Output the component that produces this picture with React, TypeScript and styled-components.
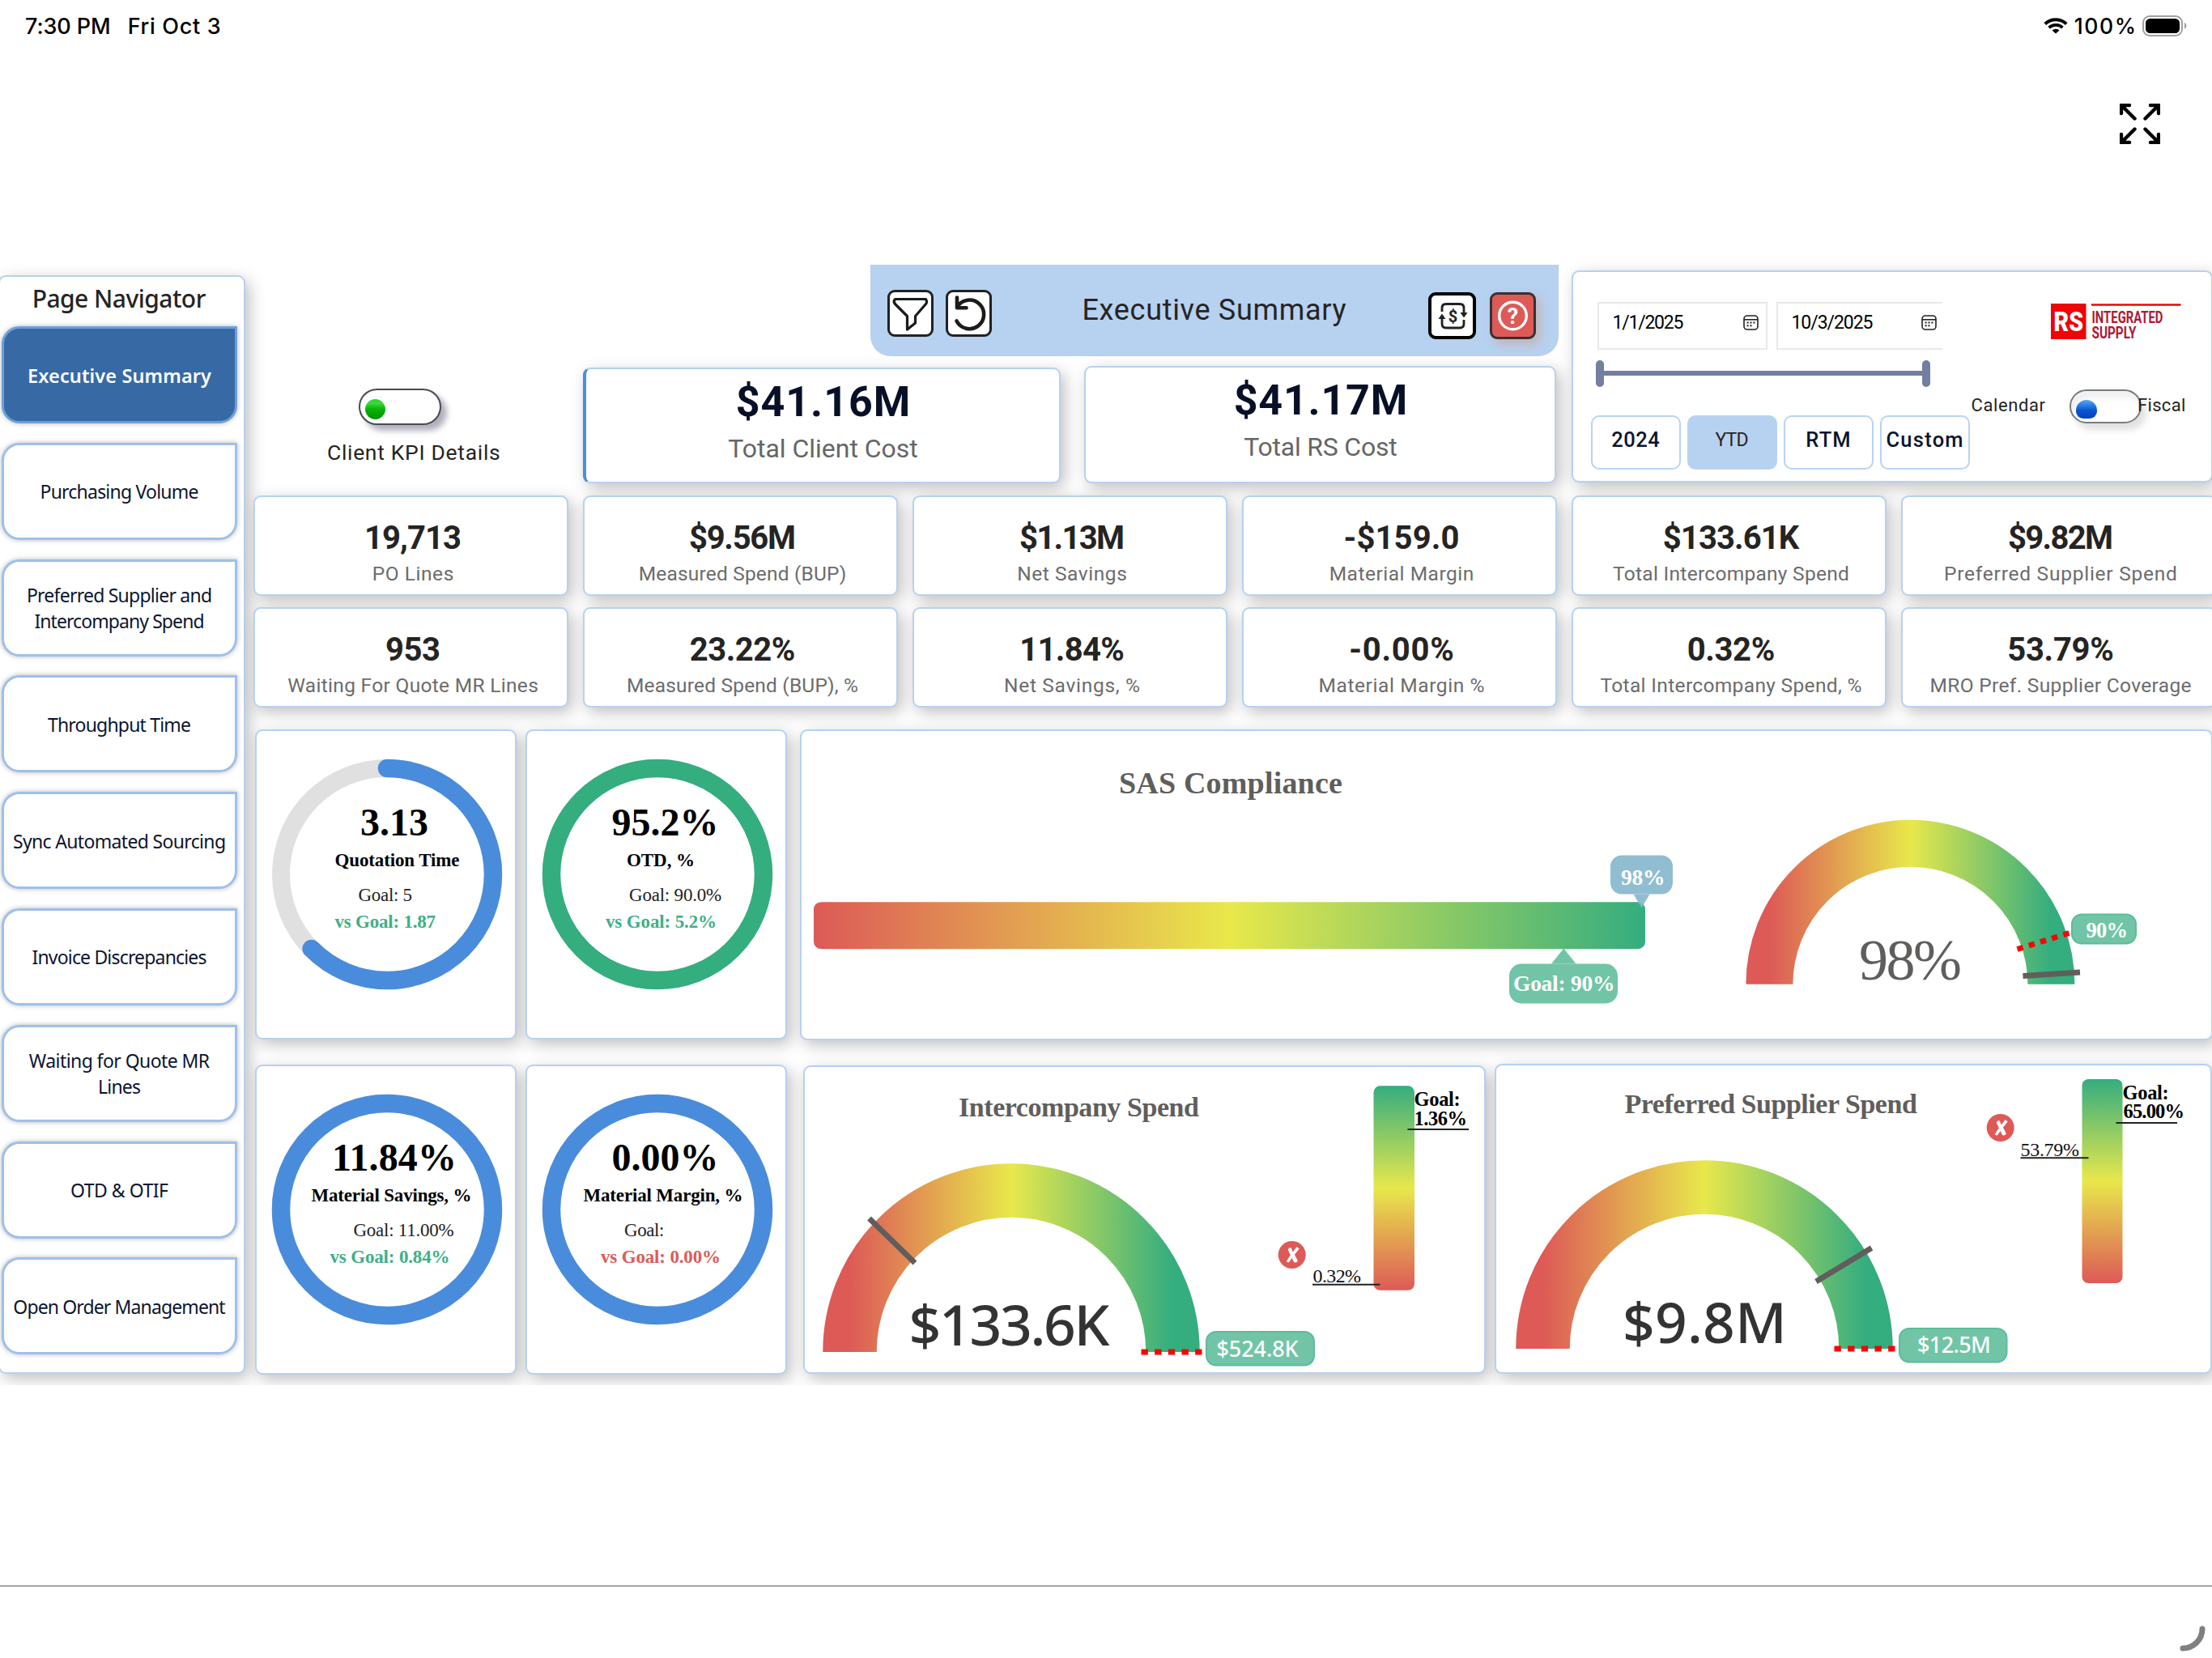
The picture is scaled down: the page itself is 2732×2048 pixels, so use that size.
import React from "react";
import styled, { createGlobalStyle, css } from "styled-components";

const GlobalStyle = createGlobalStyle`
  *, *::before, *::after { box-sizing: border-box; }
  body { margin: 0; background: #fff; overflow: hidden; }
  h1, h2, p { margin: 0; font-weight: inherit; }
`;

const fonts = {
  ui: 'Inter, "Liberation Sans", sans-serif',
  din: 'Roboto, "Liberation Sans", sans-serif',
  segoe: '"Noto Sans", "Open Sans", sans-serif',
  serif: '"Liberation Serif", "Times New Roman", serif',
};

const colors = {
  line: "#b7d1f0",
  blue: "#4a8cdc",
  green: "#34ad7f",
  red: "#dd5a57",
  mint: "#71c5a6",
  heading: "#605e5c",
  value: "#252423",
};

/* ---------- text that keeps a set width through its tracking ---------- */

const canvas = document.createElement("canvas").getContext("2d")!;

function tracking(text: string, font: string, width: number) {
  canvas.font = font;
  const m = canvas.measureText(text);
  const ink = m.actualBoundingBoxLeft + m.actualBoundingBoxRight;
  return (width - ink) / Math.max(1, text.length - 1);
}

type LabelProps = {
  children: string;
  size: number;
  weight?: number;
  family?: string;
  color?: string;
  line?: number;
  width?: number;
};

const LabelText = styled.span<{ $size: number; $weight: number; $family: string; $color: string; $line: number }>`
  display: block;
  flex: none;
  white-space: pre;
  font: ${(p) => `${p.$weight} ${p.$size}px/${p.$line}px ${p.$family}`};
  color: ${(p) => p.$color};
`;

function Label({ children, size, weight = 400, family = fonts.din, color = colors.value, line, width }: LabelProps) {
  const ls = width ? tracking(children, `${weight} ${size}px ${family}`, width) : 0;
  return (
    <LabelText
      $size={size}
      $weight={weight}
      $family={family}
      $color={color}
      $line={line ?? Math.round(size * 1.3)}
      style={{ letterSpacing: ls, marginRight: -ls }}
    >
      {children}
    </LabelText>
  );
}

/* ---------- page frame ---------- */

const Screen = styled.div`
  width: 2732px;
  height: 2048px;
  display: flex;
  flex-direction: column;
  background: #fff;
  overflow: hidden;
`;

const StatusBar = styled.header`
  height: 64px;
  flex: none;
  display: flex;
  align-items: center;
  justify-content: space-between;
  padding: 0 30px 0 31px;
`;

const StatusGroup = styled.div<{ $gap: number }>`
  display: flex;
  align-items: center;
  gap: ${(p) => p.$gap}px;
`;

const ActionRow = styled.div`
  height: 254px;
  flex: none;
  display: flex;
  justify-content: flex-end;
  padding: 64px 64px 0 0;
`;

const Report = styled.main`
  height: 1393px;
  flex: none;
  display: flex;
  align-items: flex-start;
  overflow: hidden;
`;

const Footer = styled.footer`
  margin-top: 247px;
  height: 90px;
  flex: none;
  border-top: 2px solid #a6a6a6;
  display: flex;
  justify-content: flex-end;
  align-items: flex-end;
  padding: 0 8px 8px 0;
`;

const cardFrame = css`
  background: #fff;
  border: 2px solid ${colors.line};
  border-radius: 9px;
  box-shadow: 5px 6px 19px rgba(0, 0, 0, 0.25);
`;

/* ---------- navigator ---------- */

const Navigator = styled.nav`
  ${cardFrame}
  width: 305px;
  height: 1357px;
  flex: none;
  margin: 22px 0 0 -2px;
  padding: 7px 8px 0 2px;
  display: flex;
  flex-direction: column;
  align-items: flex-start;
`;

const NavTitle = styled.h1`
  width: 290px;
  height: 54px;
  flex: none;
  display: flex;
  justify-content: center;
`;

const NavList = styled.div`
  display: flex;
  flex-direction: column;
  gap: 23.8px;
`;

const NavItem = styled.button<{ $active?: boolean }>`
  width: 291px;
  height: 120px;
  display: flex;
  flex-direction: column;
  align-items: center;
  justify-content: center;
  padding: 1px 0 0;
  border: 3px solid ${(p) => (p.$active ? "#6d9fd8" : "#9fc0ea")};
  border-radius: 22px 0 22px 22px;
  background: ${(p) => (p.$active ? "#376aa5" : "#fff")};
  box-shadow: 0 0 6px rgba(0, 0, 0, 0.28);
`;

const navItems: { lines: [string, number][]; active?: boolean }[] = [
  { lines: [["Executive Summary", 225]], active: true },
  { lines: [["Purchasing Volume", 193]] },
  { lines: [["Preferred Supplier and", 226], ["Intercompany Spend", 209]] },
  { lines: [["Throughput Time", 176]] },
  { lines: [["Sync Automated Sourcing", 261]] },
  { lines: [["Invoice Discrepancies", 215]] },
  { lines: [["Waiting for Quote MR", 223], ["Lines", 50]] },
  { lines: [["OTD & OTIF", 120]] },
  { lines: [["Open Order Management", 261]] },
];

/* ---------- top band ---------- */

const Body = styled.div`
  width: 2440px;
  flex: none;
  margin-left: -1px;
  display: flex;
  flex-direction: column;
`;

const TopBand = styled.div`
  height: 279px;
  display: flex;
  align-items: flex-start;
`;

const ToggleColumn = styled.div`
  width: 418px;
  flex: none;
  display: flex;
  flex-direction: column;
  padding: 162px 0 0 102px;
  gap: 17px;
`;

const KpiSwitch = styled.div`
  width: 102px;
  height: 45px;
  margin-left: 39px;
  padding: 11px 0 0 6px;
  border: 2px solid #4b4a55;
  border-radius: 23px;
  background: #fff;
  box-shadow: 7px 7px 7px rgba(60, 60, 90, 0.4);
`;

const KpiKnob = styled.div`
  width: 25px;
  height: 25px;
  border-radius: 50%;
  background: linear-gradient(#2bd52b 0%, #3fd63f 22%, #0ab50a 48%, #00a400 75%, #069006 100%);
`;

const CenterColumn = styled.div`
  width: 1205px;
  flex: none;
  padding-top: 9px;
`;

const Banner = styled.div`
  width: 850px;
  height: 113px;
  margin-left: 355px;
  padding: 31px 28px 0 21px;
  display: flex;
  align-items: flex-start;
  background: ${colors.line};
  border-radius: 0 0 25px 25px;
`;

const BannerTitle = styled.div`
  flex: 1;
  display: flex;
  justify-content: center;
  padding: 2px 0 0 12px;
`;

const IconButton = styled.button<{ $edge: string; $fill?: string; $wide?: boolean; $end?: boolean; $glow?: boolean }>`
  width: ${(p) => (p.$wide ? 59 : 57)}px;
  height: 58px;
  flex: none;
  margin: ${(p) => (p.$end ? "3px 0 0 17px" : "0 15px 0 0")};
  padding: 0;
  border: ${(p) => (p.$wide ? 4 : 3.5)}px solid ${(p) => p.$edge};
  border-radius: 9px;
  background: ${(p) => p.$fill ?? "#fff"};
  box-shadow: ${(p) => (p.$glow ? "5px 6px 12px rgba(200, 170, 160, 0.75)" : "none")};
  display: flex;
  align-items: center;
  justify-content: center;
  & > svg { flex: none; }
`;

const CostRow = styled.div`
  display: flex;
  align-items: flex-end;
  gap: 29px;
  margin-top: 12px;
`;

const CostCard = styled.section<{ $w: number; $h: number; $accent?: boolean }>`
  ${cardFrame}
  width: ${(p) => p.$w}px;
  height: ${(p) => p.$h}px;
  border-left: ${(p) => (p.$accent ? "4px solid #4a8fdf" : `2px solid ${colors.line}`)};
  padding: 9px 0 0 1px;
  display: flex;
  flex-direction: column;
  align-items: center;
  gap: 5px;
`;

/* ---------- filter panel ---------- */

const FilterPanel = styled.section`
  ${cardFrame}
  width: 792px;
  height: 262px;
  flex: none;
  margin: 15.5px 0 0 15.5px;
  padding: 37px 0 0 22px;
  display: flex;
`;

const PeriodColumn = styled.div`
  width: 470px;
  flex: none;
`;

const DateRow = styled.div`
  display: flex;
  gap: 11px;
  padding-left: 8px;
`;

const DateInput = styled.div<{ $cut?: boolean }>`
  width: ${(p) => (p.$cut ? 205 : 210)}px;
  height: 59px;
  border: 2px solid #e9e9e9;
  border-right-width: ${(p) => (p.$cut ? 0 : 2)}px;
  display: flex;
  justify-content: space-between;
  padding: 9px ${(p) => (p.$cut ? 7 : 9)}px 0 17px;
  & > svg { margin-top: 5px; }
`;

const Slider = styled.div`
  width: 413px;
  height: 33px;
  margin: 13px 0 35px 6px;
  display: flex;
  align-items: center;
`;

const SliderHandle = styled.div`
  width: 10px;
  height: 33px;
  border-radius: 5px;
  background: #737ea2;
`;

const SliderTrack = styled.div`
  flex: 1;
  height: 6px;
  background: #737ea2;
`;

const PeriodRow = styled.div`
  display: flex;
  gap: 8px;
`;

const PeriodButton = styled.button<{ $active?: boolean }>`
  width: 111px;
  height: 67px;
  padding: 0 0 5px;
  display: flex;
  align-items: center;
  justify-content: center;
  border: 2px solid #b9d3f3;
  border-radius: 10px;
  background: ${(p) => (p.$active ? colors.line : "#fff")};
`;

const BrandColumn = styled.div`
  width: 290px;
  display: flex;
  flex-direction: column;
  & > svg { margin: 2px 0 0 98px; overflow: visible; }
`;

const YearRow = styled.div`
  display: flex;
  align-items: flex-start;
  margin-top: 56px;
`;

const YearLabel = styled.div<{ $ml: number }>`
  margin: 6px 0 0 ${(p) => p.$ml}px;
  position: relative;
`;

const YearSwitch = styled.div`
  width: 89px;
  height: 42px;
  margin-left: 30px;
  padding: 11px 0 0 6px;
  border: 2px solid #7b7b7b;
  border-radius: 21px;
  background: #fff;
  box-shadow: 6px 8px 9px rgba(0, 0, 0, 0.12), inset 4px 9px 7px rgba(0, 0, 0, 0.06);
`;

const YearKnob = styled.div`
  width: 26px;
  height: 23px;
  border-radius: 13px 13px 9px 9px;
  background: linear-gradient(#5fa4ee 0%, #2b7ce0 30%, #0a55d0 55%, #0640c0 100%);
`;

/* ---------- kpi grid ---------- */

const KpiGrid = styled.div`
  display: grid;
  grid-template-columns: repeat(6, 389px);
  grid-auto-rows: 124px;
  gap: 14px 18px;
  margin: 15px 0 0 10.5px;
`;

const KpiCard = styled.section`
  ${cardFrame}
  padding: 27px 0 0 6px;
  display: flex;
  flex-direction: column;
  align-items: center;
  gap: 4px;
`;

const kpis: [string, number, string, number][] = [
  ["19,713", 116, "PO Lines", 98],
  ["$9.56M", 129, "Measured Spend (BUP)", 253],
  ["$1.13M", 127, "Net Savings", 133],
  ["-$159.0", 140, "Material Margin", 175],
  ["$133.61K", 168, "Total Intercompany Spend", 291],
  ["$9.82M", 127, "Preferred Supplier Spend", 285],
  ["953", 66, "Waiting For Quote MR Lines", 309],
  ["23.22%", 128, "Measured Spend (BUP), %", 283],
  ["11.84%", 125, "Net Savings, %", 165],
  ["-0.00%", 126, "Material Margin %", 202],
  ["0.32%", 106, "Total Intercompany Spend, %", 322],
  ["53.79%", 128, "MRO Pref. Supplier Coverage", 321],
];

/* ---------- lower section ---------- */

const LowerSection = styled.div`
  display: flex;
  align-items: flex-start;
  margin: 27px 0 0 12.5px;
`;

const RingGrid = styled.div`
  display: grid;
  grid-template-columns: 323px 323px;
  grid-auto-rows: 383px;
  gap: 30.5px 11.5px;
`;

const RingCard = styled.section`
  ${cardFrame}
  display: grid;
  & > * { grid-area: 1 / 1; }
`;

const RingText = styled.div`
  padding-top: 85px;
  display: flex;
  flex-direction: column;
  align-items: flex-start;
`;

const RingLine = styled.div<{ $center?: number; $left?: number; $gap: number }>`
  margin-top: ${(p) => p.$gap}px;
  ${(p) =>
    p.$center !== undefined
      ? css`
          width: ${p.$center * 2}px;
          display: flex;
          justify-content: center;
        `
      : css`
          padding-left: ${p.$left}px;
        `}
`;

type Ring = {
  value: string;
  valueWidth: number;
  title: string;
  titleWidth: number;
  titleCenter: number;
  goal: string;
  goalWidth: number;
  left: number;
  delta: string;
  deltaWidth: number;
  deltaColor: string;
  stroke: string;
  share: number;
};

const rings: Ring[] = [
  { value: "3.13", valueWidth: 82, title: "Quotation Time", titleWidth: 153, titleCenter: 174, goal: "Goal: 5", goalWidth: 66, left: 97, delta: "vs Goal: 1.87", deltaWidth: 124, deltaColor: "#3db087", stroke: colors.blue, share: 0.626 },
  { value: "95.2%", valueWidth: 127, title: "OTD, %", titleWidth: 81, titleCenter: 165, goal: "Goal: 90.0%", goalWidth: 114, left: 97, delta: "vs Goal: 5.2%", deltaWidth: 135, deltaColor: "#3db087", stroke: colors.green, share: 1 },
  { value: "11.84%", valueWidth: 147, title: "Material Savings, %", titleWidth: 196, titleCenter: 167, goal: "Goal: 11.00%", goalWidth: 124, left: 91, delta: "vs Goal: 0.84%", deltaWidth: 146, deltaColor: "#3db087", stroke: colors.blue, share: 1 },
  { value: "0.00%", valueWidth: 127, title: "Material Margin, %", titleWidth: 195, titleCenter: 168, goal: "Goal:", goalWidth: 48, left: 91, delta: "vs Goal: 0.00%", deltaWidth: 146, deltaColor: colors.red, stroke: colors.blue, share: 1 },
];

function RingTile({ ring }: { ring: Ring }) {
  const r = 131;
  const length = 2 * Math.PI * r;
  return (
    <RingCard>
      <svg width="319" height="378" viewBox="0 0 319 378" fill="none">
        <circle cx="161" cy="177" r={r} stroke="#e0e0e0" strokeWidth="22" />
        <circle
          cx="161"
          cy="177"
          r={r}
          stroke={ring.stroke}
          strokeWidth="22.5"
          strokeLinecap={ring.share < 1 ? "round" : "butt"}
          strokeDasharray={ring.share < 1 ? `${length * ring.share} ${length}` : undefined}
          transform="rotate(-90 161 177)"
        />
      </svg>
      <RingText>
        <RingLine $center={170.5} $gap={0}>
          <Label size={48} weight={700} family={fonts.serif} color="#000" line={56} width={ring.valueWidth}>{ring.value}</Label>
        </RingLine>
        <RingLine $center={ring.titleCenter} $gap={4}>
          <Label size={23} weight={700} family={fonts.serif} color="#000" line={30} width={ring.titleWidth}>{ring.title}</Label>
        </RingLine>
        <RingLine $left={ring.left + 29} $gap={13}>
          <Label size={23} family={fonts.serif} color="#222" line={30} width={ring.goalWidth}>{ring.goal}</Label>
        </RingLine>
        <RingLine $left={ring.left} $gap={3}>
          <Label size={23} weight={700} family={fonts.serif} color={ring.deltaColor} line={30} width={ring.deltaWidth}>{ring.delta}</Label>
        </RingLine>
      </RingText>
    </RingCard>
  );
}

const ChartColumn = styled.div`
  margin-left: 16px;
  display: flex;
  flex-direction: column;
  gap: 29px;
`;

const ChartRow = styled.div`
  display: flex;
  align-items: flex-end;
  gap: 11px;
  padding-left: 4px;
`;

const ChartCard = styled.section<{ $w: number; $h: number }>`
  ${cardFrame}
  width: ${(p) => p.$w}px;
  height: ${(p) => p.$h}px;
  display: grid;
  & > * { grid-area: 1 / 1; }
`;

const ChartTitle = styled.h2<{ $left: number; $top: number }>`
  padding: ${(p) => p.$top}px 0 0 ${(p) => p.$left}px;
`;

/* ---------- chart parts; a chart's viewBox uses report canvas units ---------- */

function Ramp({ id, vertical }: { id: string; vertical?: boolean }) {
  return (
    <linearGradient id={id} x1="0" y1={vertical ? "1" : "0"} x2={vertical ? "0" : "1"} y2="0">
      <stop offset="0" stopColor="#dd5a57" />
      <stop offset="0.5" stopColor="#e8e84b" />
      <stop offset="1" stopColor="#34ad7f" />
    </linearGradient>
  );
}

type ChartTextProps = {
  x: number;
  cy: number;
  size: number;
  width: number;
  children: string;
  weight?: number;
  family?: string;
  fill?: string;
};

/* `cy` is the middle of the capitals, `x` the left edge of the text */
function ChartText({ x, cy, size, width, children, weight = 400, family = fonts.serif, fill = "#111" }: ChartTextProps) {
  const font = `${weight} ${size}px ${family}`;
  const ls = tracking(children, font, width);
  const cap = family === fonts.serif ? 0.335 : 0.357;
  canvas.font = font;
  const bearing = canvas.measureText(children).actualBoundingBoxLeft;
  return (
    <text x={x + bearing} y={cy + size * cap} fontFamily={family} fontSize={size} fontWeight={weight} fill={fill} letterSpacing={ls}>
      {children}
    </text>
  );
}

function GaugeArc({ cx, cy, r, width, ramp }: { cx: number; cy: number; r: number; width: number; ramp: string }) {
  return <path d={`M${cx - r} ${cy}A${r} ${r} 0 0 1 ${cx + r} ${cy}`} stroke={`url(#${ramp})`} strokeWidth={width} fill="none" />;
}

function Marker({ from, to }: { from: [number, number]; to: [number, number] }) {
  return <line x1={from[0]} y1={from[1]} x2={to[0]} y2={to[1]} stroke={colors.heading} strokeWidth="6.8" />;
}

function Target({ from, to }: { from: [number, number]; to: [number, number] }) {
  const dot = Math.hypot(to[0] - from[0], to[1] - from[1]) / 9;
  return <line x1={from[0]} y1={from[1]} x2={to[0]} y2={to[1]} stroke="#ff0000" strokeWidth="6.8" strokeDasharray={`${dot} ${dot}`} />;
}

function Badge({ x, y, w, h }: { x: number; y: number; w: number; h: number }) {
  return <rect x={x + 1} y={y + 1} width={w - 2} height={h - 2} rx="12" fill={colors.mint} stroke="#5bbd99" strokeWidth="2" />;
}

function FailMark({ cx, cy }: { cx: number; cy: number }) {
  return (
    <g transform={`translate(${cx} ${cy})`}>
      <circle r="17" fill={colors.red} />
      <path d="M-7 8.5Q-6 6-1.8 .4L-5-6.5Q-3.6-9.6-.8-8.4L1-3.6L6-10L9-7.6L3.2-.2L7.2 7.2Q5.4 10.4 2.4 9L0 4L-4 9.6Z" fill="#fff" />
    </g>
  );
}

function SasChart() {
  return (
    <svg width="1741" height="380" viewBox="991 902.5 1741 380">
      <defs>
        <Ramp id="sas-bar" />
        <Ramp id="sas-arc" />
      </defs>
      <rect x="1006" y="1113.7" width="1027" height="58" rx="9" fill="url(#sas-bar)" />
      <g fill="#84b7cb" fillOpacity="0.9">
        <path d="M2018.5 1104H2038.5L2028.5 1121Z" />
        <rect x="1990" y="1056" width="77" height="48" rx="14" />
      </g>
      <ChartText x={2003} cy={1083.5} size={27.5} width={52} weight={700} fill="#fff">98%</ChartText>
      <g fill={colors.mint}>
        <path d="M1917 1190H1947.5L1932.3 1171Z" />
        <rect x="1865" y="1190" width="134" height="49" rx="15" />
      </g>
      <ChartText x={1871} cy={1214.5} size={27.5} width={122} weight={700} fill="#fff">Goal: 90%</ChartText>

      <GaugeArc cx={2360.4} cy={1215.3} r={174} width={58} ramp="sas-arc" />
      <Target from={[2492.5, 1172]} to={[2556.5, 1152]} />
      <Marker from={[2499.5, 1205]} to={[2570, 1200.5]} />
      <ChartText x={2299} cy={1185.5} size={72} width={123} fill={colors.heading}>98%</ChartText>
      <Badge x={2559} y={1128} w={81} h={38} />
      <ChartText x={2577.5} cy={1149} size={26.5} width={50} weight={700} fill="#fff">90%</ChartText>
    </svg>
  );
}

function IntercompanyChart() {
  return (
    <svg width="839" height="376" viewBox="995 1318 839 376">
      <defs>
        <Ramp id="ic-arc" />
        <Ramp id="ic-bar" vertical />
      </defs>
      <GaugeArc cx={1250} cy={1670} r={199.5} width={66.5} ramp="ic-arc" />
      <Marker from={[1074.5, 1505]} to={[1131, 1560]} />
      <Target from={[1410.5, 1670]} to={[1485.5, 1670]} />
      <ChartText x={1126.5} cy={1637} size={69.5} width={245} weight={500} family={fonts.segoe} fill="#333">$133.6K</ChartText>
      <Badge x={1490} y={1644} w={135} h={43.5} />
      <ChartText x={1504.5} cy={1666} size={27} width={101} weight={500} family={fonts.segoe} fill="#fff">$524.8K</ChartText>

      <rect x="1697.5" y="1341.3" width="50.5" height="252.5" rx="8" fill="url(#ic-bar)" />
      <ChartText x={1748.5} cy={1357.5} size={24.5} width={54} weight={700} fill="#000">Goal:</ChartText>
      <ChartText x={1748.5} cy={1381.3} size={24.5} width={63} weight={700} fill="#000">1.36%</ChartText>
      <path d="M1739.5 1395H1815" stroke="#222" strokeWidth="2" />
      <FailMark cx={1596.7} cy={1550} />
      <ChartText x={1622.5} cy={1576} size={24} width={59.5}>0.32%</ChartText>
      <path d="M1622 1586.7H1705.5" stroke="#222" strokeWidth="2" />
    </svg>
  );
}

function PreferredChart() {
  return (
    <svg width="882" height="378" viewBox="1849 1316 882 378">
      <defs>
        <Ramp id="ps-arc" />
        <Ramp id="ps-bar" vertical />
      </defs>
      <GaugeArc cx={2106} cy={1666} r={199.5} width={66.5} ramp="ps-arc" />
      <Marker from={[2244, 1583]} to={[2312.5, 1541.5]} />
      <Target from={[2266.5, 1666]} to={[2341.5, 1666]} />
      <ChartText x={2008} cy={1634} size={69.5} width={194} weight={500} family={fonts.segoe} fill="#333">$9.8M</ChartText>
      <Badge x={2346} y={1640} w={134.5} h={43.5} />
      <ChartText x={2370} cy={1661.5} size={27} width={88} weight={500} family={fonts.segoe} fill="#fff">$12.5M</ChartText>

      <rect x="2572.5" y="1333" width="50" height="252" rx="8" fill="url(#ps-bar)" />
      <ChartText x={2623.5} cy={1349.5} size={24.5} width={54} weight={700} fill="#000">Goal:</ChartText>
      <ChartText x={2623.5} cy={1373} size={24.5} width={74} weight={700} fill="#000">65.00%</ChartText>
      <path d="M2614.5 1387H2690" stroke="#222" strokeWidth="2" />
      <FailMark cx={2471.7} cy={1393} />
      <ChartText x={2497.5} cy={1419.5} size={24} width={71.5}>53.79%</ChartText>
      <path d="M2496.5 1430.3H2580.5" stroke="#222" strokeWidth="2" />
    </svg>
  );
}

/* ---------- icons ---------- */

const Wifi = () => (
  <svg width="30" height="20" viewBox="0 0 30 20" fill="none" stroke="#000">
    <path d="M1.8 7.6A19 19 0 0 1 28.2 7.6" strokeWidth="4" />
    <path d="M6.6 12.2A12.2 12.2 0 0 1 23.4 12.2" strokeWidth="3.8" />
    <path d="M15 19.6L10.6 15.4A6.4 6.4 0 0 1 19.4 15.4Z" fill="#000" stroke="none" />
  </svg>
);

const Battery = () => (
  <svg width="56" height="26" viewBox="0 0 56 26" fill="none">
    <rect x="1" y="1" width="48" height="24" rx="8" stroke="#a0a0a0" strokeWidth="2" />
    <rect x="4" y="4" width="42" height="18" rx="5.5" fill="#000" />
    <path d="M52 8.8A4.6 4.6 0 0 1 52 17Z" fill="#a0a0a0" />
  </svg>
);

const Expand = () => (
  <svg width="50" height="50" viewBox="0 0 50 50" fill="none" stroke="#000" strokeWidth="4.4" strokeLinecap="round">
    <path d="M2 12V2H12M2.5 2.5L18.5 18.5" />
    <path d="M38 2H48V12M47.5 2.5L31.5 18.5" />
    <path d="M2 38V48H12M2.5 47.5L18.5 31.5" />
    <path d="M48 38V48H38M47.5 47.5L31.5 31.5" />
  </svg>
);

const Spinner = () => (
  <svg width="32" height="32" viewBox="0 0 32 32" fill="none" stroke="#808080" strokeWidth="7" strokeLinecap="round">
    <path d="M28 4A24 24 0 0 1 4 28" />
  </svg>
);

const Funnel = () => (
  <svg width="57" height="58" viewBox="0 0 57 58" fill="none" stroke="#1b1b1b" strokeWidth="3.2" strokeLinejoin="round">
    <path d="M9.5 11.5H47.5Q49.5 15 47.5 17.5L34.5 32.5V41L24.5 49V32.5L9.5 17.5Q7 14.5 9.5 11.5Z" />
  </svg>
);

const Reset = () => (
  <svg width="57" height="58" viewBox="0 0 57 58" fill="none" stroke="#1b1b1b" strokeWidth="4.6" strokeLinecap="round" strokeLinejoin="round">
    <path d="M14.5 20.5A17.8 17.8 0 1 1 13.5 38.5" />
    <path d="M14 9.5V22.3H25.5" />
  </svg>
);

const Currency = () => (
  <svg width="59" height="58" viewBox="0 0 59 58" fill="none" stroke="#222" strokeWidth="2.8">
    <path d="M17 24V19.5Q17 14.5 22 14.5H39Q44 14.5 44 19.5V26" />
    <path d="M44 34V39Q44 44 39 44H22Q17 44 17 39V32" />
    <path d="M12.5 33L17 26.5L21.5 33ZM39.5 25L44 31.5L48.5 25Z" fill="#222" stroke="none" />
    <text x="30.5" y="36.5" textAnchor="middle" fontFamily={fonts.din} fontWeight="700" fontSize="20" fill="#222" stroke="none">$</text>
  </svg>
);

const Help = () => (
  <svg width="57" height="58" viewBox="0 0 57 58" fill="none">
    <circle cx="28.5" cy="29" r="16.8" stroke="#fff" strokeWidth="3.4" />
    <text x="28.5" y="38.5" textAnchor="middle" fontFamily={fonts.din} fontWeight="700" fontSize="27" fill="#fff">?</text>
  </svg>
);

const Calendar = () => (
  <svg width="19" height="19" viewBox="0 0 19 19" fill="none" stroke="#222" strokeWidth="1.6">
    <rect x="1" y="1" width="17" height="17" rx="4" />
    <path d="M1 5.8H18" />
    <path d="M4.6 9.6H6.6M8.5 9.6H10.5M12.4 9.6H14.4M4.6 13.2H6.6M8.5 13.2H10.5" strokeWidth="2" />
  </svg>
);

const BrandLogo = () => (
  <svg width="170" height="50" viewBox="0 0 170 50">
    <rect width="43.5" height="44" fill="#ee0505" />
    <text x="3.5" y="34" fontFamily={fonts.din} fontWeight="900" fontSize="33" fill="#fff" textLength="36.5" lengthAdjust="spacingAndGlyphs">RS</text>
    <path d="M50 1.5H160.5" stroke="#ee0505" strokeWidth="2.6" />
    <g fontFamily={fonts.din} fontWeight="700" fontSize="21" fill="#ad1a33">
      <text x="50.5" y="24.3" textLength="88" lengthAdjust="spacingAndGlyphs">INTEGRATED</text>
      <text x="50.5" y="43.4" textLength="55" lengthAdjust="spacingAndGlyphs">SUPPLY</text>
    </g>
  </svg>
);

/* ---------- page ---------- */

export default function App() {
  return (
    <Screen>
      <GlobalStyle />
      <StatusBar>
        <StatusGroup $gap={21}>
          <Label size={27} weight={500} family={fonts.ui} color="#000" width={103}>7:30 PM</Label>
          <Label size={27} weight={500} family={fonts.ui} color="#000" width={112}>Fri Oct 3</Label>
        </StatusGroup>
        <StatusGroup $gap={8}>
          <Wifi />
          <Label size={26.5} weight={500} family={fonts.ui} color="#000" width={73}>100%</Label>
          <Battery />
        </StatusGroup>
      </StatusBar>
      <ActionRow>
        <Expand />
      </ActionRow>

      <Report>
        <Navigator>
          <NavTitle>
            <Label size={30} weight={500} family={fonts.segoe} width={213} line={40}>Page Navigator</Label>
          </NavTitle>
          <NavList>
            {navItems.map((item) => (
              <NavItem key={item.lines[0][0]} $active={item.active}>
                {item.lines.map(([text, width]) => (
                  <Label
                    key={text}
                    size={item.active ? 23.5 : 23}
                    weight={item.active ? 600 : 400}
                    family={fonts.segoe}
                    color={item.active ? "#fff" : "#0b1530"}
                    line={32}
                    width={width}
                  >
                    {text}
                  </Label>
                ))}
              </NavItem>
            ))}
          </NavList>
        </Navigator>

        <Body>
          <TopBand>
            <ToggleColumn>
              <KpiSwitch>
                <KpiKnob />
              </KpiSwitch>
              <Label size={26.5} width={212} line={34}>Client KPI Details</Label>
            </ToggleColumn>

            <CenterColumn>
              <Banner>
                <IconButton $edge="#222"><Funnel /></IconButton>
                <IconButton $edge="#222"><Reset /></IconButton>
                <BannerTitle>
                  <Label size={36} width={324} line={46}>Executive Summary</Label>
                </BannerTitle>
                <IconButton $edge="#000" $wide $end><Currency /></IconButton>
                <IconButton $edge="#333" $fill={colors.red} $end $glow><Help /></IconButton>
              </Banner>
              <CostRow>
                <CostCard $w={590} $h={143} $accent>
                  <Label size={52} weight={700} color="#081028" width={211} line={64}>$41.16M</Label>
                  <Label size={32} color="#666" width={234} line={40}>Total Client Cost</Label>
                </CostCard>
                <CostCard $w={583} $h={145}>
                  <Label size={52} weight={700} color="#081028" width={210} line={64}>$41.17M</Label>
                  <Label size={32} color="#666" width={189} line={40}>Total RS Cost</Label>
                </CostCard>
              </CostRow>
            </CenterColumn>

            <FilterPanel>
              <PeriodColumn>
                <DateRow>
                  <DateInput>
                    <Label size={23} color="#000" width={87} line={30}>1/1/2025</Label>
                    <Calendar />
                  </DateInput>
                  <DateInput $cut>
                    <Label size={23} color="#000" width={100} line={30}>10/3/2025</Label>
                    <Calendar />
                  </DateInput>
                </DateRow>
                <Slider>
                  <SliderHandle />
                  <SliderTrack />
                  <SliderHandle />
                </Slider>
                <PeriodRow>
                  <PeriodButton><Label size={25.5} weight={500} color="#0b1530" width={58}>2024</Label></PeriodButton>
                  <PeriodButton $active><Label size={23} width={40}>YTD</Label></PeriodButton>
                  <PeriodButton><Label size={25.5} weight={500} color="#0b1530" width={53}>RTM</Label></PeriodButton>
                  <PeriodButton><Label size={25.5} weight={500} color="#0b1530" width={93}>Custom</Label></PeriodButton>
                </PeriodRow>
              </PeriodColumn>
              <BrandColumn>
                <BrandLogo />
                <YearRow>
                  <YearLabel $ml={0}><Label size={22} width={91} line={28}>Calendar</Label></YearLabel>
                  <YearSwitch><YearKnob /></YearSwitch>
                  <YearLabel $ml={-5}><Label size={22} width={57} line={28}>Fiscal</Label></YearLabel>
                </YearRow>
              </BrandColumn>
            </FilterPanel>
          </TopBand>

          <KpiGrid>
            {kpis.map(([value, valueWidth, name, nameWidth]) => (
              <KpiCard key={name}>
                <Label size={40} weight={700} width={valueWidth} line={48}>{value}</Label>
                <Label size={24.5} color="#6c6c6c" width={nameWidth} line={32}>{name}</Label>
              </KpiCard>
            ))}
          </KpiGrid>

          <LowerSection>
            <RingGrid>
              {rings.map((ring) => (
                <RingTile key={ring.title} ring={ring} />
              ))}
            </RingGrid>
            <ChartColumn>
              <ChartCard $w={1745} $h={384}>
                <SasChart />
                <ChartTitle $left={392} $top={42}>
                  <Label size={38} weight={700} family={fonts.serif} color={colors.heading} width={273} line={44}>SAS Compliance</Label>
                </ChartTitle>
              </ChartCard>
              <ChartRow>
                <ChartCard $w={843} $h={381}>
                  <IntercompanyChart />
                  <ChartTitle $left={190} $top={28}>
                    <Label size={34} weight={700} family={fonts.serif} color={colors.heading} width={296} line={44}>Intercompany Spend</Label>
                  </ChartTitle>
                </ChartCard>
                <ChartCard $w={886} $h={383}>
                  <PreferredChart />
                  <ChartTitle $left={158.5} $top={26}>
                    <Label size={34} weight={700} family={fonts.serif} color={colors.heading} width={362} line={44}>Preferred Supplier Spend</Label>
                  </ChartTitle>
                </ChartCard>
              </ChartRow>
            </ChartColumn>
          </LowerSection>
        </Body>
      </Report>

      <Footer>
        <Spinner />
      </Footer>
    </Screen>
  );
}
